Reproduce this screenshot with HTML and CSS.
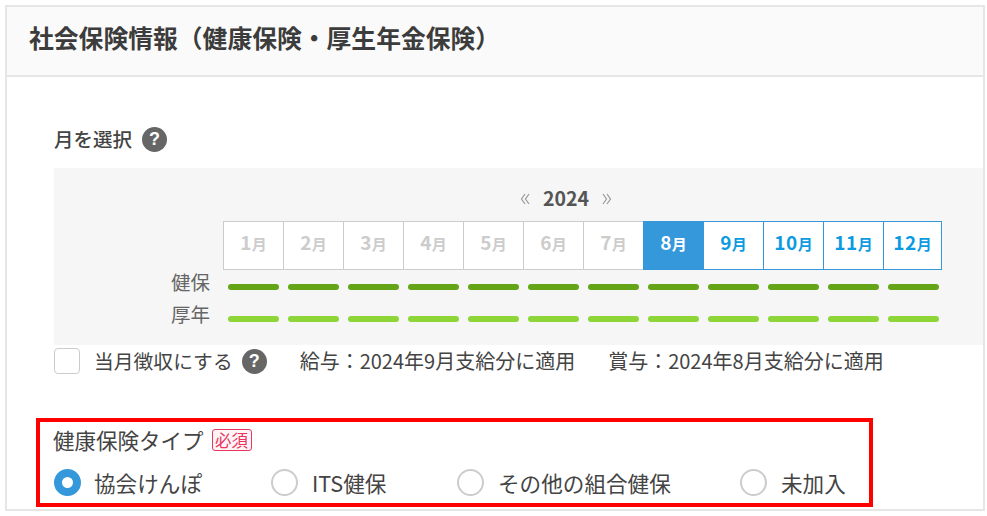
FILE: index.html
```html
<!DOCTYPE html>
<html lang="ja">
<head>
<meta charset="UTF-8">
<meta name="viewport" content="width=device-width, initial-scale=1.0">
<title>社会保険情報</title>
<link rel="stylesheet" href="styles.css">
</head>
<body>
    <div class="panel">
        <h2 class="panel-head">社会保険情報（健康保険・厚生年金保険）</h2>
        <div class="panel-body">
            <p class="month-label">月を選択 <span class="help">?</span></p>

            <div class="calendar">
                <div class="year-nav">
                    <svg class="arrow" viewBox="0 0 10 12"><path d="M5 1 L1.5 6 L5 11 M9 1 L5.5 6 L9 11"/></svg>
                    <span class="year">2024</span>
                    <svg class="arrow" viewBox="0 0 10 12"><path d="M1 1 L4.5 6 L1 11 M5 1 L8.5 6 L5 11"/></svg>
                </div>
                <div class="grid-row">
                    <div class="row-label"></div>
                    <div class="months">
                        <div class="month past">1<small>月</small></div>
                        <div class="month past">2<small>月</small></div>
                        <div class="month past">3<small>月</small></div>
                        <div class="month past">4<small>月</small></div>
                        <div class="month past">5<small>月</small></div>
                        <div class="month past">6<small>月</small></div>
                        <div class="month past">7<small>月</small></div>
                        <div class="month current">8<small>月</small></div>
                        <div class="month future">9<small>月</small></div>
                        <div class="month future">10<small>月</small></div>
                        <div class="month future">11<small>月</small></div>
                        <div class="month future">12<small>月</small></div>
                    </div>
                </div>
                <div class="grid-row bar-row first-bars">
                    <div class="row-label">健保</div>
                    <div class="bars health">
                        <i></i><i></i><i></i><i></i><i></i><i></i><i></i><i></i><i></i><i></i><i></i><i></i>
                    </div>
                </div>
                <div class="grid-row bar-row">
                    <div class="row-label">厚年</div>
                    <div class="bars pension">
                        <i></i><i></i><i></i><i></i><i></i><i></i><i></i><i></i><i></i><i></i><i></i><i></i>
                    </div>
                </div>
            </div>

            <div class="collect-row">
                <span class="checkbox"></span>
                <span class="collect-text">当月徴収にする</span>
                <span class="help">?</span>
                <span class="apply first">給与：2024年9月支給分に適用</span>
                <span class="apply">賞与：2024年8月支給分に適用</span>
            </div>

            <div class="type-box">
                <div class="type-title">健康保険タイプ <span class="required">必須</span></div>
                <div class="radios">
                    <div class="radio-item item-1"><span class="radio checked"></span>協会けんぽ</div>
                    <div class="radio-item item-2"><span class="radio"></span>ITS健保</div>
                    <div class="radio-item item-3"><span class="radio"></span>その他の組合健保</div>
                    <div class="radio-item"><span class="radio"></span>未加入</div>
                </div>
            </div>
        </div>
    </div>
</body>
</html>
```

FILE: styles.css
```css
body {
    margin: 0;
    padding: 0;
    height: 516px;
    overflow: hidden;
    background-color: #fff;
    color: #444;
    font-family: "Noto Sans CJK JP", "Noto Sans", sans-serif;
}

.panel {
    margin: 5px 2px 0 5px;
    height: 506px;
    border: 2px solid #e6e6e6;
    box-sizing: border-box;
    overflow: hidden;
}

.panel-head {
    margin: 0;
    height: 70px;
    padding-left: 22px;
    line-height: 60px;
    font-size: 24.8px;
    font-weight: 700;
    color: #3c3c3c;
    background-color: #fafafa;
    border-bottom: 2px solid #e6e6e6;
    box-sizing: border-box;
}

.panel-body {
    padding: 47px 0 0 47px;
}

.month-label {
    margin: 0;
    height: 44px;
    line-height: 30px;
    font-size: 19.5px;
    font-weight: 500;
    color: #444;
    display: flex;
    align-items: center;
    gap: 10px;
    padding-bottom: 14px;
    box-sizing: border-box;
}

.help {
    width: 25px;
    height: 25px;
    border-radius: 50%;
    background-color: #666;
    color: #fff;
    font-family: "Liberation Sans", sans-serif;
    font-size: 18px;
    font-weight: 700;
    line-height: 25px;
    text-align: center;
    flex: none;
}

.calendar {
    background-color: #f6f6f6;
    height: 177px;
    box-sizing: border-box;
    padding-top: 14px;
}

.year-nav {
    display: flex;
    align-items: center;
    gap: 13px;
    height: 30px;
    margin-bottom: 9px;
    padding-left: 466px;
}

.year {
    font-size: 19.5px;
    font-weight: 700;
    color: #555;
}

.arrow {
    width: 10px;
    height: 12px;
    margin-top: 4px;
    fill: none;
    stroke: #999;
    stroke-width: 1.2;
}

.grid-row {
    display: flex;
}

.row-label {
    width: 169px;
    padding-right: 13px;
    box-sizing: border-box;
    text-align: right;
    font-size: 19.5px;
    line-height: 22px;
    color: #666;
    flex: none;
}

.months {
    display: flex;
    height: 49px;
}

.month {
    width: 60px;
    box-sizing: border-box;
    background-color: #fff;
    border: 1px solid #ccc;
    border-right: 0;
    text-align: center;
    font-size: 19px;
    letter-spacing: 0.5px;
    font-weight: 700;
    line-height: 39px;
}

.month:last-child {
    width: 59px;
    border-right: 1px solid #3498db;
}

.month small {
    font-size: 15px;
    letter-spacing: 0;
}

.month.past {
    color: #ccc;
}

.month.future {
    color: #0c9be0;
    border-color: #3498db;
}

.month.current {
    color: #fff;
    background-color: #3498db;
    border-color: #3498db;
}

.bar-row {
    height: 32px;
}

.first-bars {
    margin-top: 1px;
}

.bars {
    display: flex;
    width: 720px;
    height: 6px;
    gap: 9px;
    margin-top: 13px;
    padding-left: 5px;
    box-sizing: border-box;
}

.bars i {
    display: block;
    width: 51px;
    height: 6px;
    border-radius: 3px;
}

.bars.health i {
    background-color: #64a518;
}

.bars.pension i {
    background-color: #8ed637;
}

.collect-row {
    display: flex;
    align-items: center;
    height: 32px;
    font-size: 19.8px;
    color: #444;
}

.checkbox {
    width: 26px;
    height: 26px;
    box-sizing: border-box;
    border: 1.5px solid #ccc;
    border-radius: 4px;
    background-color: #fff;
    margin-right: 14px;
}

.collect-text {
    margin-right: 9px;
    margin-bottom: 2px;
}

.apply {
    margin-left: 33px;
    margin-bottom: 2px;
    font-size: 20px;
}

.type-box {
    margin: 41px 0 0 -18px;
    width: 837px;
    height: 89px;
    box-sizing: border-box;
    border: 4px solid #f00;
    padding: 3px 0 0 14px;
    font-size: 21.5px;
}

.type-title {
    height: 42px;
    line-height: 28px;
    display: flex;
    align-items: center;
    gap: 8px;
    padding-bottom: 13px;
    margin-left: -1px;
    box-sizing: border-box;
}

.required {
    border: 1px solid #e8355e;
    border-radius: 3px;
    color: #e8355e;
    font-size: 16.5px;
    line-height: 20px;
    padding: 0 2.5px;
    background-color: #fff5f7;
}

.radios {
    display: flex;
    font-size: 21.6px;
}

.radio-item {
    display: flex;
    align-items: center;
    height: 30px;
}

.item-1 {
    width: 217px;
}

.item-2 {
    width: 186px;
}

.item-3 {
    width: 283px;
}

.radio {
    width: 27px;
    height: 27px;
    box-sizing: border-box;
    border: 2px solid #ccc;
    border-radius: 50%;
    background-color: #fff;
    margin-right: 14px;
}

.radio.checked {
    border: 8px solid #3498db;
    margin-right: 13px;
}
```
